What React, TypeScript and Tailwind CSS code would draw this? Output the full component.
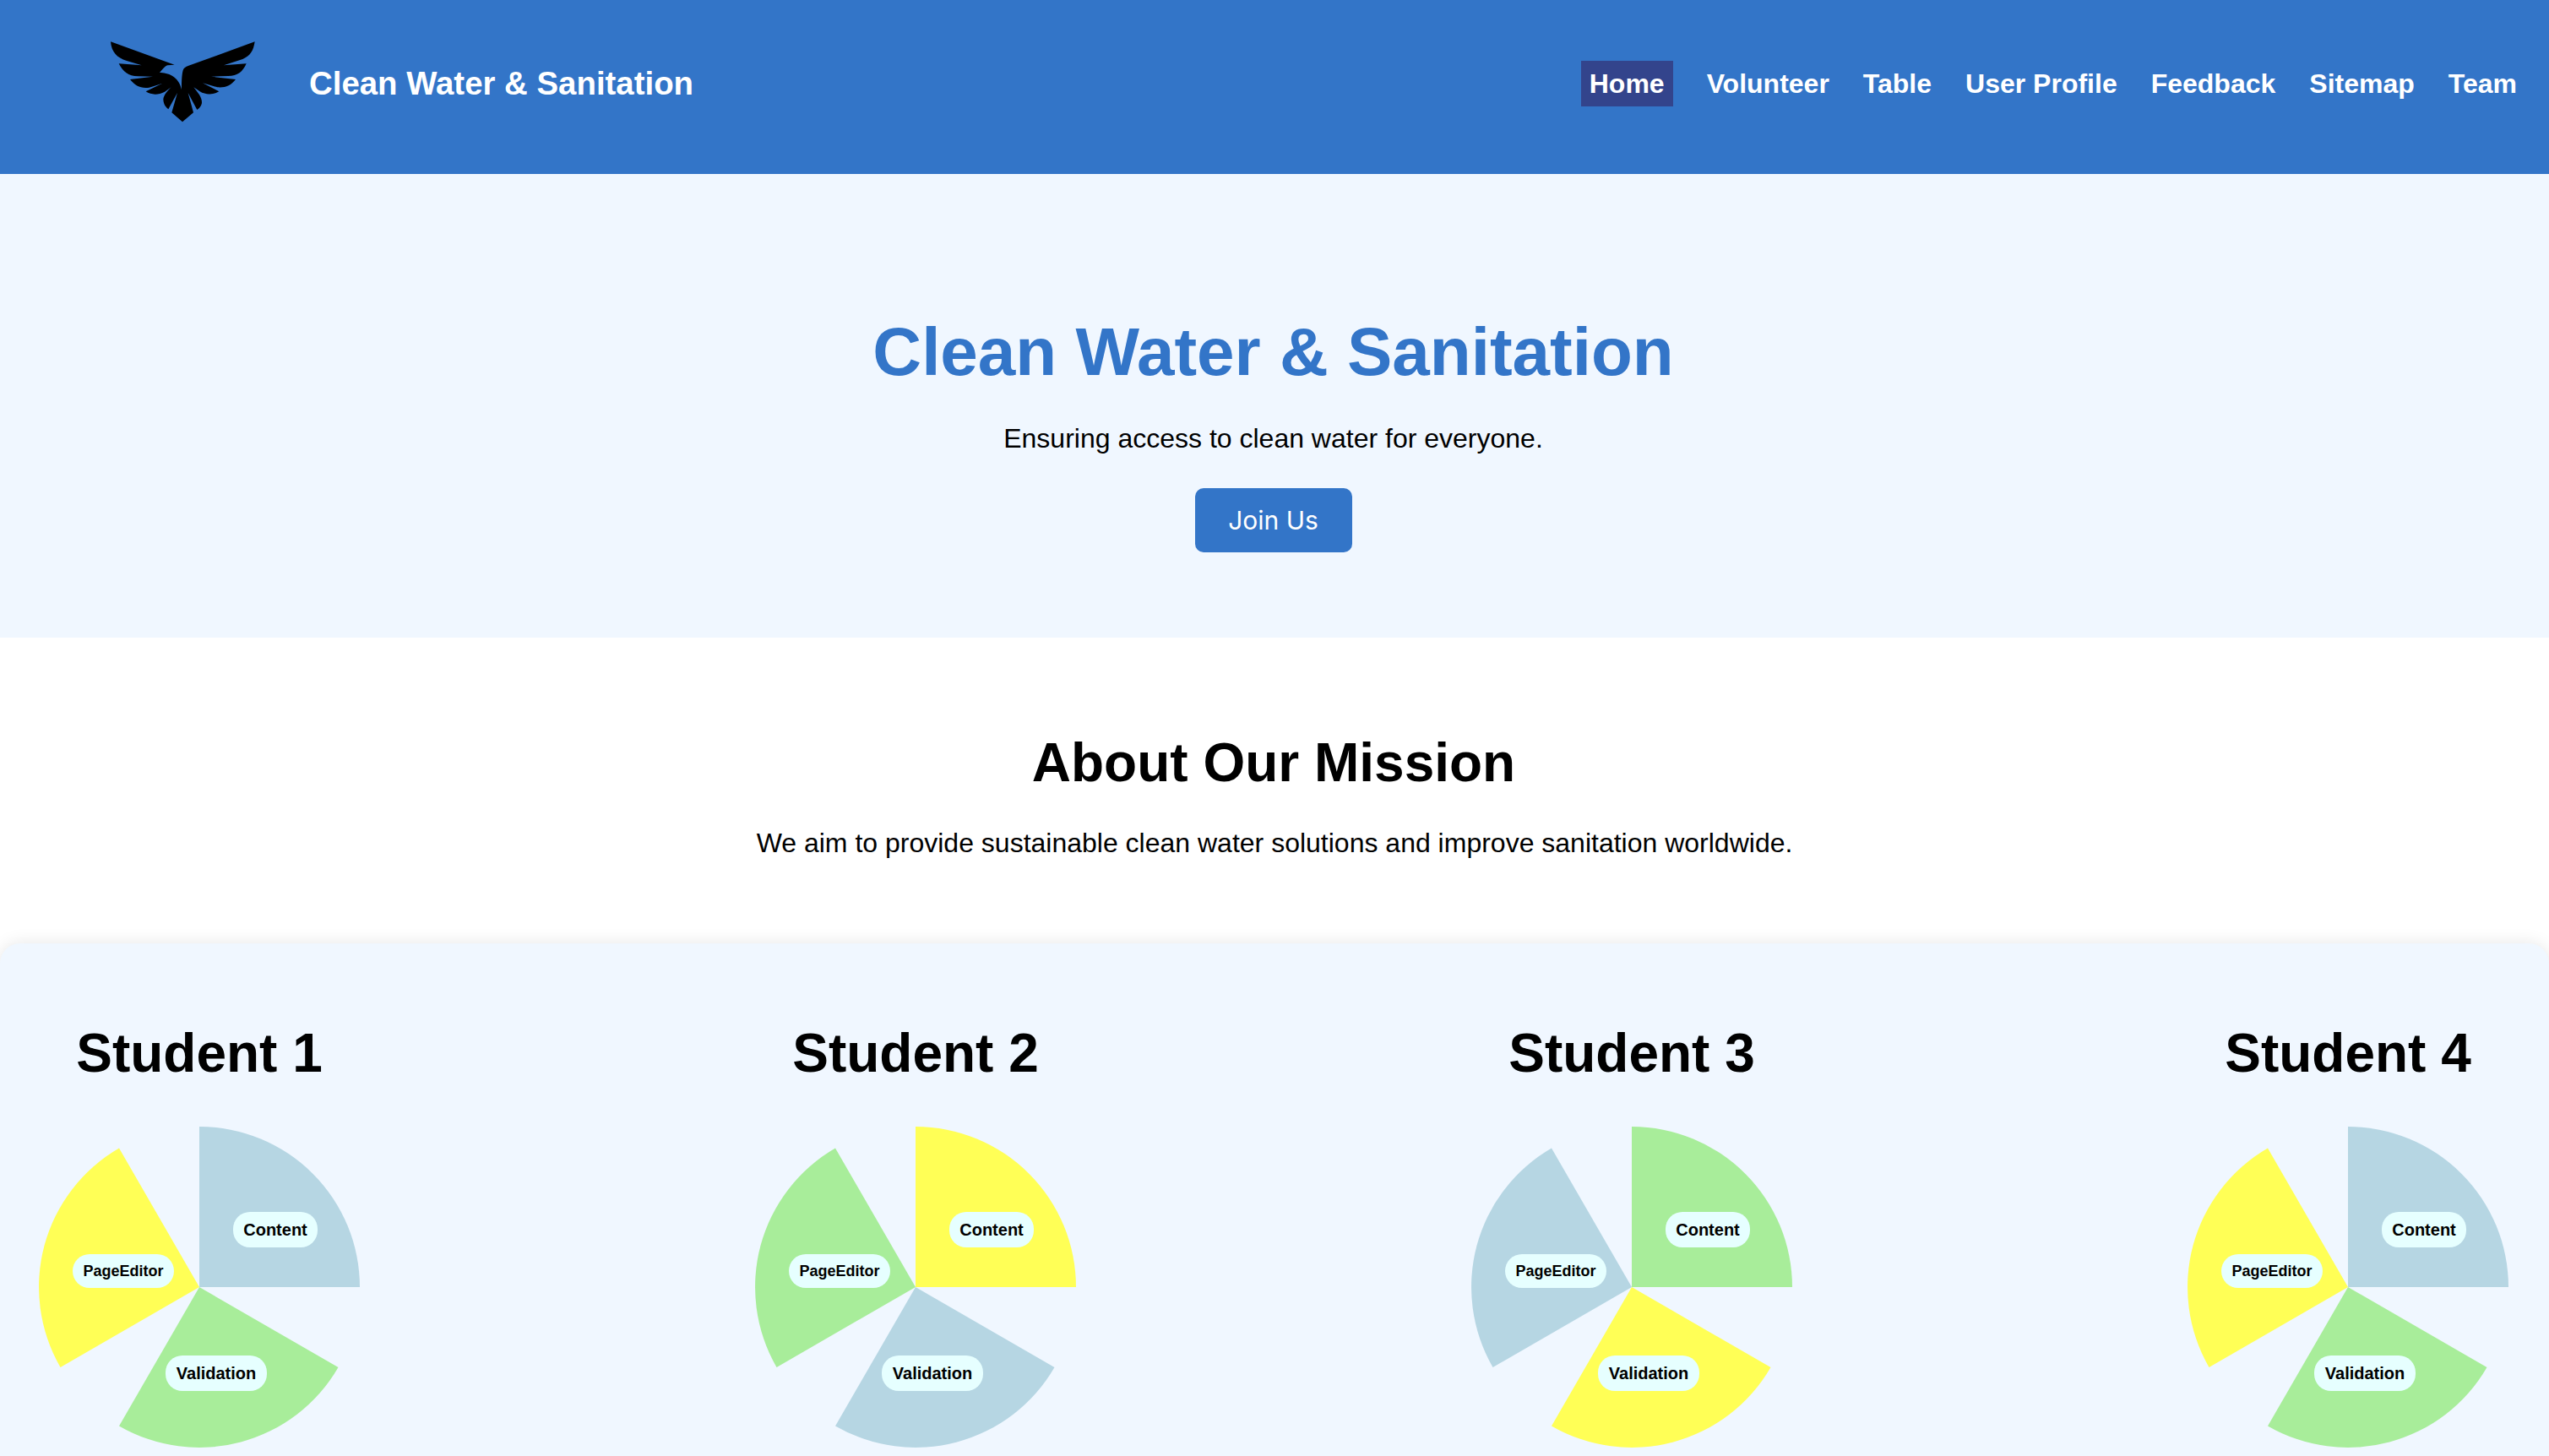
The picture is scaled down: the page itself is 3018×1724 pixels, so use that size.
import React from "react";

const BLUE = "#b6d6e3";
const GREEN = "#a8ed9a";
const YELLOW = "#ffff56";

const navLinks = ["Home", "Volunteer", "Table", "User Profile", "Feedback", "Sitemap", "Team"];

const students = [
  { name: "Student 1", colors: [BLUE, GREEN, YELLOW] },
  { name: "Student 2", colors: [YELLOW, BLUE, GREEN] },
  { name: "Student 3", colors: [GREEN, YELLOW, BLUE] },
  { name: "Student 4", colors: [BLUE, GREEN, YELLOW] },
];

function Eagle() {
  return (
    <svg viewBox="0 0 720 450" className="w-[240px] h-[150px] shrink-0">
      <path
        fill="#000"
        d="M93 88 L320 170 L295 172 C285 175 278 186 267 198 C295 198 335 210 345 258 C345 225 346 205 350 190 C352 182 358 178 368 174 L605 88 C600 120 590 138 562 150 L495 172 L575 166 C562 195 545 210 510 210 L450 212 L537 222 C520 245 500 252 472 250 L420 235 L478 265 C460 277 430 278 410 265 L388 250 C402 268 417 285 417 303 C417 315 408 325 400 330 L368 270 L387 340 L348 373 L310 340 L330 270 L298 328 C285 318 280 305 280 292 C282 278 295 262 308 250 L285 266 C262 278 238 278 218 265 L275 237 L230 251 C200 255 180 245 162 222 L243 212 L190 211 C155 210 138 195 122 166 L203 172 L150 156 C115 145 96 125 93 88 Z"
      />
    </svg>
  );
}

function Pie({ colors }: { colors: string[] }) {
  return (
    <div className="relative w-[380px] h-[380px]">
      <svg viewBox="0 0 380 380" className="w-[380px] h-[380px]">
        <path fill={colors[0]} d="M190 190 L190 0 A190 190 0 0 1 380 190 Z" />
        <path fill={colors[1]} d="M190 190 L354.5 285 A190 190 0 0 1 95 354.5 Z" />
        <path fill={colors[2]} d="M190 190 L25.5 285 A190 190 0 0 1 95 25.5 Z" />
      </svg>
      <span className="absolute left-[230px] top-[101px] h-[42px] w-[100px] flex items-center justify-center rounded-[20px] bg-[#e6ffff] text-[20px] font-bold text-black">
        Content
      </span>
      <span className="absolute left-[40px] top-[151px] h-[40px] w-[120px] flex items-center justify-center rounded-[20px] bg-[#e6ffff] text-[18px] font-bold text-black">
        PageEditor
      </span>
      <span className="absolute left-[150px] top-[271px] h-[42px] w-[120px] flex items-center justify-center rounded-[20px] bg-[#e6ffff] text-[20px] font-bold text-black">
        Validation
      </span>
    </div>
  );
}

export default function App() {
  return (
    <div className="h-[1724px] overflow-hidden bg-white text-black font-['Liberation_Sans',Arial,sans-serif] antialiased">
      <header className="h-[206px] bg-[#3375c8] pt-[20px]">
        <div className="h-[158px] flex items-center justify-between pl-[100px] pr-[28px]">
          <div className="flex items-center gap-[26px] h-full">
            <div className="self-start">
              <Eagle />
            </div>
            <span className="text-[38.4px] font-bold text-white">Clean Water &amp; Sanitation</span>
          </div>
          <nav className="flex items-center gap-[20px]">
            {navLinks.map((link) => (
              <a
                key={link}
                className={`h-[54px] px-[10px] flex items-center text-[32px] font-bold text-white ${
                  link === "Home" ? "bg-[#33448c] mr-[10px]" : ""
                }`}
              >
                {link}
              </a>
            ))}
          </nav>
        </div>
      </header>

      <section className="h-[549px] bg-[#f0f7ff] pt-[165px] pr-[3px] flex flex-col items-center">
        <h1 className="text-[80px] leading-[92px] font-bold text-[#3375c8]">Clean Water &amp; Sanitation</h1>
        <p className="mt-[38px] text-[32px] leading-[37px]">Ensuring access to clean water for everyone.</p>
        <button className="mt-[40px] w-[186px] h-[76px] rounded-[10px] bg-[#3375c8] text-white text-[30px] font-['Inter',sans-serif]">
          Join Us
        </button>
      </section>

      <section className="h-[362px] bg-white pt-[111px] flex flex-col items-center">
        <h2 className="text-[64px] leading-[74px] font-bold pr-[2px]">About Our Mission</h2>
        <p className="mt-[40px] text-[32px] leading-[37px]">
          We aim to provide sustainable clean water solutions and improve sanitation worldwide.
        </p>
      </section>

      <section className="h-[700px] rounded-[24px] bg-[#f0f7ff] shadow-[0_0_20px_rgba(0,0,0,0.1)] pt-[93px] pl-[46px] pr-[48px] flex justify-between">
        {students.map((student) => (
          <div key={student.name} className="w-[380px] flex flex-col items-center">
            <h2 className="text-[64px] leading-[74px] font-bold whitespace-nowrap">{student.name}</h2>
            <div className="mt-[50px]">
              <Pie colors={student.colors} />
            </div>
          </div>
        ))}
      </section>
    </div>
  );
}
